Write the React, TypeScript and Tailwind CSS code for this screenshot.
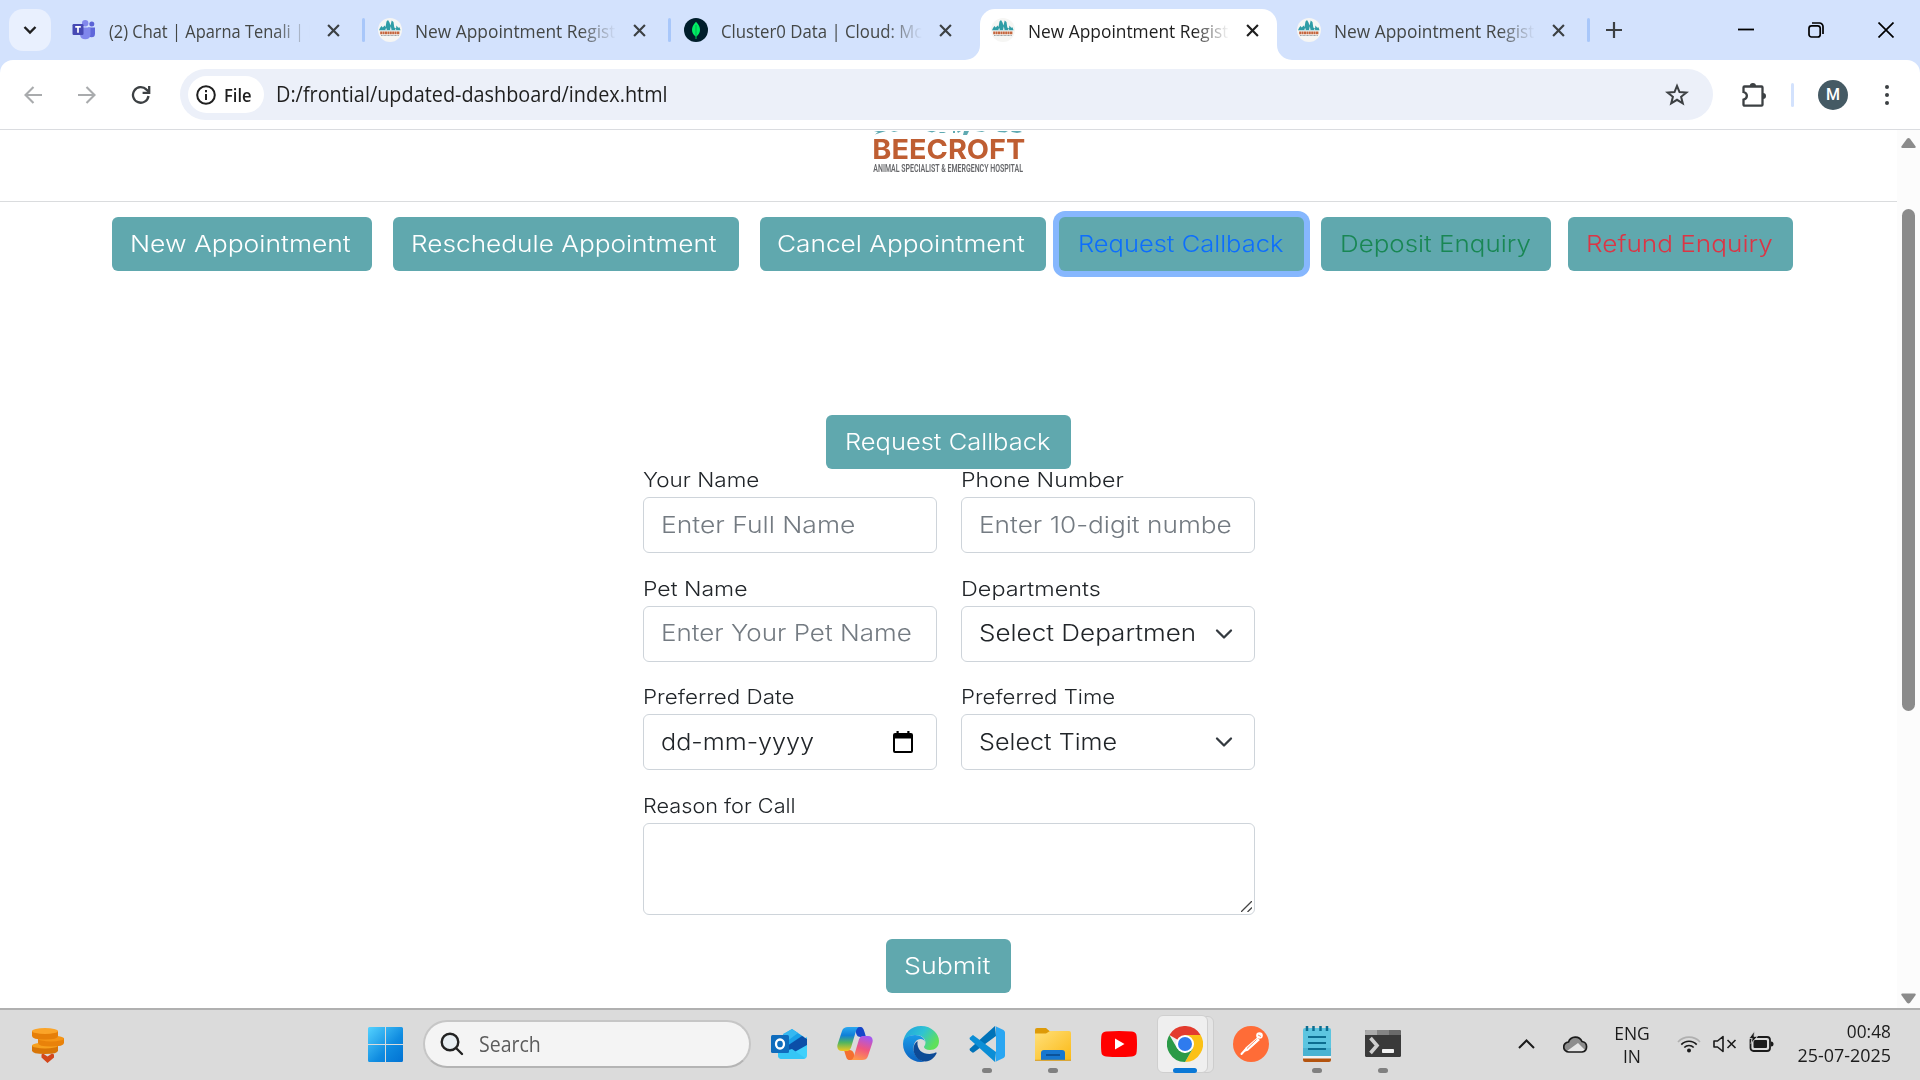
import type { ReactNode } from "react";

function HospitalMark() {
  return (
    <svg width="24" height="24" viewBox="0 0 24 24" className="shrink-0">
      <circle cx="12" cy="12" r="12" fill="#f6f6f4" />
      <path d="M1 12.200l1-2.200 1.500-2 1.300 1.500L6.500 7.500 7.500 9l1-5.500 1.500-1.500 1.500 2.500 1 3 1.200-5 1.800 1.500.8 5.500 1.700 1 .5-3 1.700 2.200 1.300-.5L22.500 12.200z" fill="#2f9da6" />
      <path d="M7.300 12.200l.8-2.400.8 2.400zM12 12.200l.8-4 .8 4zM17 12.200l.7-1.800.7 1.800z" fill="#f6f6f4" />
      <path d="M2.200 14.900h19.600" stroke="#c5663d" strokeWidth="2.600" strokeDasharray="2 .4" />
      <path d="M3 17.500h18" stroke="#9aa3a5" strokeWidth="1" strokeDasharray="1 .4" />
    </svg>
  );
}

function TeamsMark() {
  return (
    <svg width="24" height="24" viewBox="0 0 24 24" className="shrink-0">
      <circle cx="19.8" cy="6" r="2.5" fill="#5b63d6" />
      <path d="M16 9.5h7v6.2a3.5 3.5 0 01-7 0z" fill="#5f67db" />
      <circle cx="13.2" cy="5.2" r="3.2" fill="#8288ec" />
      <path d="M8 9.5h10.5v7.3a5.3 5.3 0 01-10.5 0z" fill="#8087ec" />
      <rect x=".5" y="6" width="11" height="11" rx="1.2" fill="#4649b4" />
      <path d="M3.2 8.9h5.6M6 8.9v5.8" stroke="#fff" strokeWidth="1.7" />
    </svg>
  );
}

function LeafMark() {
  return (
    <svg width="24" height="24" viewBox="0 0 24 24" className="shrink-0">
      <circle cx="12" cy="12" r="12" fill="#001e2b" />
      <path d="M12 3.800c3 3 4 5.500 4 8.200 0 3-1.600 4.800-3.600 6.400V21h-.8v-2.600C9.600 16.800 8 15 8 12c0-2.700 1-5.200 4-8.200z" fill="#00ed64" />
      <path d="M12 7v12" stroke="#00a24a" strokeWidth=".8" />
    </svg>
  );
}

function CloseX({ dark }: { dark?: boolean }) {
  return (
    <svg width="13" height="13" viewBox="0 0 12 12" className={dark ? "shrink-0 text-[#1f1f1f]" : "shrink-0 text-[#3c4043]"}>
      <path d="M1 1l10 10M11 1L1 11" stroke="currentColor" strokeWidth="2" />
    </svg>
  );
}

function Tab({ icon, scale, active, children }: { icon: ReactNode; scale: string; active?: boolean; children: string }) {
  return (
    <div className={`flex h-[42px] w-[268px] shrink-0 items-center ${active ? "text-[#1f1f1f]" : "text-[#444746]"}`}>
      {icon}
      <div className="ml-[13px] w-[201px] whitespace-nowrap pt-[2px] text-[18px] leading-6 [mask-image:linear-gradient(to_right,#000_82%,transparent)]">
        <span className={`inline-block origin-left ${scale}`}>{children}</span>
      </div>
      <div className="ml-[17px]">
        <CloseX dark={active} />
      </div>
    </div>
  );
}

function Divider({ className }: { className: string }) {
  return <div className={`h-6 w-[3px] shrink-0 rounded-full bg-[#a8c7fa] ${className}`} />;
}

function TabStrip() {
  return (
    <div className="flex h-[60px] items-start bg-[#d3e2fd] pt-[9px]">
      <div className="ml-[9px] flex h-[42px] w-[42px] items-center justify-center rounded-[14px] bg-[#e9f0fe]">
        <svg width="14" height="10" viewBox="0 0 14 10" fill="none" stroke="#1f1f1f" strokeWidth="2.4">
          <path d="M1.500 2L7 7.500 12.500 2" />
        </svg>
      </div>
      <div className="ml-[21px] flex">
        <Tab icon={<TeamsMark />} scale="scale-x-[0.912]">(2) Chat | Aparna Tenali | M</Tab>
      </div>
      <Divider className="mt-[9px] ml-[22px]" />
      <div className="ml-[13px] flex">
        <Tab icon={<HospitalMark />} scale="scale-x-[0.964]">New Appointment Regist</Tab>
      </div>
      <Divider className="mt-[9px] ml-[22px]" />
      <div className="ml-[13px] flex">
        <Tab icon={<LeafMark />} scale="scale-x-[0.932]">Cluster0 Data | Cloud: Mc</Tab>
      </div>
      <div className="relative ml-[28px] flex h-[51px] w-[297px] rounded-t-[15px] bg-white pl-[11px]">
        <svg width="15" height="15" className="absolute bottom-0 -left-[15px]" fill="#fff">
          <path d="M15 0v15H0A15 15 0 0015 0z" />
        </svg>
        <Tab icon={<HospitalMark />} scale="scale-x-[0.964]" active>New Appointment Regist</Tab>
        <svg width="15" height="15" className="absolute -right-[15px] bottom-0" fill="#fff">
          <path d="M0 0v15h15A15 15 0 010 0z" />
        </svg>
      </div>
      <div className="ml-[20px] flex">
        <Tab icon={<HospitalMark />} scale="scale-x-[0.964]">New Appointment Regist</Tab>
      </div>
      <Divider className="mt-[9px] ml-[22px]" />
      <svg width="16" height="16" className="mt-[13px] ml-[16px]" stroke="#3c4043" strokeWidth="2.2">
        <path d="M8 0v16M0 8h16" />
      </svg>
      <div className="mt-[13px] mr-[26px] ml-auto flex items-center gap-[54px]">
        <svg width="16" height="16" stroke="#000" strokeWidth="1.8">
          <path d="M0 7.500h16" />
        </svg>
        <svg width="16" height="16" fill="none" stroke="#000" strokeWidth="1.7">
          <rect x="1" y="3.800" width="11.200" height="11.200" rx="2.500" />
          <path d="M4 1h7.500A3.500 3.500 0 0115 4.500V12" />
        </svg>
        <svg width="16" height="16" stroke="#000" strokeWidth="1.700">
          <path d="M.5.500l15 15M15.500.500l-15 15" />
        </svg>
      </div>
    </div>
  );
}

function Toolbar() {
  return (
    <div className="bg-[#d3e2fd]">
      <div className="flex h-[70px] items-start rounded-t-[13px] border-b border-[#dadce0] bg-white pt-[9px]">
        <div className="flex h-[51px] w-[180px] items-center pl-[24px]">
          <svg width="18" height="18" fill="none" stroke="#a9abad" strokeWidth="2.100">
            <path d="M18 9H1.500M9.500 1L1.500 9l8 8" />
          </svg>
          <svg width="18" height="18" className="ml-[36px]" fill="none" stroke="#a9abad" strokeWidth="2.100">
            <path d="M0 9h16.500M8.500 1l8 8-8 8" />
          </svg>
          <svg width="20" height="20" viewBox="0 0 20 20" className="ml-[35px]" fill="none" stroke="#3c4043" strokeWidth="2.300">
            <path d="M17.500 11a7.800 7.800 0 11-2-6.400L18 7" />
            <path d="M18.200 1v6.800h-6.600" />
          </svg>
        </div>
        <div className="flex h-[51px] w-[1533px] items-center rounded-full bg-[#ecf0f9] pl-[8px]">
          <div className="flex h-[37px] w-[76px] items-center rounded-full bg-white pl-[8px]">
            <svg width="20" height="20" viewBox="0 0 20 20" fill="none" stroke="#1f1f1f" strokeWidth="2">
              <circle cx="10" cy="10" r="8.800" />
              <path d="M10 9v6M10 5v2.200" />
            </svg>
            <span className="ml-[8px] inline-block origin-left scale-x-[0.920] text-[18px] leading-6 font-semibold text-[#1f1f1f]">File</span>
          </div>
          <span className="ml-[12px] inline-block origin-left scale-x-[0.945] text-[21px] text-[#1f1f1f]">
            D:/frontial/updated-dashboard/index.html
          </span>
          <svg width="24" height="24" viewBox="0 0 24 24" className="mr-[24px] ml-auto" fill="none" stroke="#3c4043" strokeWidth="2">
            <path d="M12 2.800l2.500 6.200 6.900.500-5.300 4.300 1.700 6.600L12 16.800l-5.800 3.600 1.700-6.600-5.300-4.300 6.900-.500z" />
          </svg>
        </div>
        <div className="flex h-[51px] items-center">
          <svg width="27" height="27" viewBox="0 0 27 27" className="ml-[28px]" fill="none" stroke="#3c4043" strokeWidth="2.300">
            <path d="M3.500 5.500h17a1 1 0 011 1v17.200a1 1 0 01-1 1h-17a1 1 0 01-1-1v-5c4.500-1 4.500-6.700 0-7.700v-4.500a1 1 0 011-1z" />
            <path d="M8.800 5a3 3 0 016.200 0zM22 12a3 3 0 010 6z" fill="#3c4043" stroke="none" />
          </svg>
          <div className="ml-[23px] h-6 w-[3px] rounded-full bg-[#d3e2fd]" />
          <div className="ml-[24px] flex h-[30px] w-[30px] items-center justify-center rounded-full bg-[#455a64] font-['Roboto'] text-[16px] font-medium text-white">M</div>
          <div className="ml-[37px] flex flex-col gap-[4px]">
            <i className="h-[4px] w-[4px] rounded-full bg-[#3c4043]" />
            <i className="h-[4px] w-[4px] rounded-full bg-[#3c4043]" />
            <i className="h-[4px] w-[4px] rounded-full bg-[#3c4043]" />
          </div>
        </div>
      </div>
    </div>
  );
}

function ActionButton({ className, scale, children }: { className: string; scale: string; children: string }) {
  return (
    <button className={`flex h-[54px] shrink-0 items-center rounded-[6px] bg-[#60a8ae] text-[23px] whitespace-nowrap ${className}`}>
      <span className={`inline-block origin-left ${scale}`}>{children}</span>
    </button>
  );
}

function Field({ label, labelScale, first, children }: { label: string; labelScale: string; first?: boolean; children: ReactNode }) {
  return (
    <div>
      <div className={`h-[33px] text-[20px] text-[#212529] ${first ? "leading-[33px]" : "leading-[32px]"}`}>
        <span className={`inline-block origin-left ${labelScale}`}>{label}</span>
      </div>
      {children}
    </div>
  );
}

function Control({ text, scale, muted, icon }: { text: string; scale: string; muted?: boolean; icon?: ReactNode }) {
  return (
    <div className={`flex h-[56px] items-center justify-between rounded-[6px] border border-[#ced4da] bg-white pr-[21px] pl-[17.500px] text-[23px] ${muted ? "text-[#747b82]" : "text-[#212529]"}`}>
      <span className={`inline-block origin-left whitespace-nowrap ${scale}`}>{text}</span>
      {icon}
    </div>
  );
}

function Chevron() {
  return (
    <svg width="18" height="12" viewBox="0 0 18 12" className="shrink-0" fill="none" stroke="#343a40" strokeWidth="2.300" strokeLinecap="round" strokeLinejoin="round">
      <path d="M2 2.500l7 7 7-7" />
    </svg>
  );
}

function CalendarMark() {
  return (
    <svg width="20" height="22" viewBox="0 0 20 22" className="mr-[2px] shrink-0">
      <path d="M3.500 0h2.200v2h8.600V0h2.200v2H18a2 2 0 012 2v16a2 2 0 01-2 2H2a2 2 0 01-2-2V4a2 2 0 012-2h1.500zM2 7.500V20h16V7.500z" fill="#000" fillRule="evenodd" />
    </svg>
  );
}

function Page() {
  return (
    <div className="flex h-[878px] bg-white">
      <main className="w-[1897px] overflow-hidden font-['Inter'] font-[350]">
        <header className="flex h-[72px] flex-col items-center border-b border-[#dadcde]">
          <svg width="150" height="6" viewBox="0 0 150 6" fill="#5fa9b1">
            <path d="M0 1h12L7 2.500 1 4.500 4 2zM17 1h7l-4 1zM53 1h9l-4 1.500zM66 2h6l-2 1h-5zM79 1h2v2h-2zM83 1h4l-3 2zM90 1h5l-2 4h-4zM102 1h9l-3 1zM123 1h11l-3 1.500-6-.5zM137 1h9l2 1-5 1-5-1z" />
          </svg>
          <div className="h-[24px] text-[27.500px] leading-[26px] font-bold text-[#bf5e32]">
            <span className="inline-block scale-x-[1.050]">BEECROFT</span>
          </div>
          <div className="mt-[3px] flex h-[11px] w-[150px] items-center justify-center font-['Roboto'] text-[11.500px] leading-[11px] font-semibold whitespace-nowrap text-[#66676a]">
            <span className="inline-block scale-x-[0.608]">ANIMAL SPECIALIST &amp; EMERGENCY HOSPITAL</span>
          </div>
        </header>
        <nav className="flex pt-[15px] pl-[112px]">
          <ActionButton className="w-[260px] pl-[18px] text-white" scale="scale-x-[1.150]">New Appointment</ActionButton>
          <ActionButton className="ml-[21px] w-[346px] pl-[18px] text-white" scale="scale-x-[1.140]">Reschedule Appointment</ActionButton>
          <ActionButton className="ml-[21px] w-[286px] pl-[17px] text-white" scale="scale-x-[1.140]">Cancel Appointment</ActionButton>
          <ActionButton className="ml-[13px] w-[245px] pl-[18.500px] text-[#0d6efd] ring-6 ring-[#86b7fe]" scale="scale-x-[1.108]">Request Callback</ActionButton>
          <ActionButton className="ml-[17px] w-[230px] pl-[18.500px] text-[#198754]" scale="scale-x-[1.127]">Deposit Enquiry</ActionButton>
          <ActionButton className="ml-[17px] w-[225px] pl-[18px] text-[#dc3545]" scale="scale-x-[1.137]">Refund Enquiry</ActionButton>
        </nav>
        <div className="mx-auto mt-[144px] flex w-[612px] flex-col items-center">
          <ActionButton className="relative z-10 w-[245px] pl-[18.500px] text-white" scale="scale-x-[1.108]">Request Callback</ActionButton>
          <div className="-mt-[5px] grid w-full grid-cols-2 gap-x-[24px] gap-y-[19.670px]">
            <Field label="Your Name" labelScale="scale-x-[1.125]" first>
              <Control text="Enter Full Name" scale="scale-x-[1.150]" muted />
            </Field>
            <Field label="Phone Number" labelScale="scale-x-[1.160]" first>
              <Control text="Enter 10-digit numbe" scale="scale-x-[1.140]" muted />
            </Field>
            <Field label="Pet Name" labelScale="scale-x-[1.150]">
              <Control text="Enter Your Pet Name" scale="scale-x-[1.130]" muted />
            </Field>
            <Field label="Departments" labelScale="scale-x-[1.170]">
              <Control text="Select Departmen" scale="scale-x-[1.132]" icon={<Chevron />} />
            </Field>
            <Field label="Preferred Date" labelScale="scale-x-[1.120]">
              <Control text="dd-mm-yyyy" scale="scale-x-[1.095]" icon={<CalendarMark />} />
            </Field>
            <Field label="Preferred Time" labelScale="scale-x-[1.110]">
              <Control text="Select Time" scale="scale-x-[1.095]" icon={<Chevron />} />
            </Field>
            <div className="col-span-2">
              <Field label="Reason for Call" labelScale="scale-x-[1.085]">
                <div className="flex h-[92px] items-end justify-end rounded-[6px] border border-[#ced4da] p-[2px]">
                  <svg width="11" height="11" stroke="#444" strokeWidth="1.300">
                    <path d="M0 11L11 0M6.500 11L11 6.500" />
                  </svg>
                </div>
              </Field>
            </div>
          </div>
          <ActionButton className="mt-[24px] w-[125px] pl-[18px] text-white" scale="scale-x-[1.165]">Submit</ActionButton>
        </div>
      </main>
      <aside className="flex w-[23px] flex-col items-center bg-[#fcfcfc] pt-[8px] pb-[4px]">
        <svg width="15" height="10" fill="#8b8b8b">
          <path d="M6 .8q1.500-1.500 3 0l5.500 7.400q.8 1.600-1 1.800h-12q-1.800-.2-1-1.800z" />
        </svg>
        <div className="mt-[61px] h-[502px] w-[13px] rounded-full bg-[#8b8b8b]" />
        <svg width="15" height="11" className="mt-auto" fill="#8b8b8b">
          <path d="M6 9.700q1.500 1.500 3 0l5.500-7.400q.8-1.600-1-1.800h-12q-1.800.2-1 1.800z" />
        </svg>
      </aside>
    </div>
  );
}

function OutlookIcon() {
  return (
    <svg width="36" height="36" viewBox="0 0 36 36">
      <path d="M7 12L21 3l12 8v6L14 29z" fill="#1aa0e8" />
      <path d="M12 8l9-5 6 4-12 9z" fill="#35b8f1" />
      <path d="M17 21L36 11v18a4 4 0 01-4 4H11a4 4 0 01-4-4z" fill="#3fd0fb" />
      <path d="M16 20l15-10 5 3v6L20 28z" fill="#0b4fa8" />
      <path d="M7 27l14-4 13 9a4 4 0 01-2 1H11a4 4 0 01-4-4z" fill="#36c6f6" />
      <rect y="9" width="18" height="18" rx="1.500" fill="#0f6cbd" />
      <ellipse cx="9" cy="18" rx="4" ry="4.500" fill="none" stroke="#fff" strokeWidth="2.300" />
    </svg>
  );
}

function CopilotIcon() {
  return (
    <svg width="36" height="36" viewBox="0 0 36 36">
      <defs>
        <linearGradient id="cpA" x1="0" y1="0" x2="0" y2="1">
          <stop offset="0" stopColor="#2aa8f0" />
          <stop offset=".35" stopColor="#0f7fd8" />
          <stop offset=".65" stopColor="#52b55f" />
          <stop offset="1" stopColor="#f2c81f" />
        </linearGradient>
        <linearGradient id="cpB" x1="0.600" y1="0" x2="0.300" y2="1">
          <stop offset="0" stopColor="#a558f0" />
          <stop offset=".5" stopColor="#f0567f" />
          <stop offset="1" stopColor="#ff9a4a" />
        </linearGradient>
      </defs>
      <path d="M18 1h5c3 0 3.500 2 4.500 5l1.500 5h-5c-3 0-4-1-5-4z" fill="#1546c9" />
      <path d="M18 34h-5c-3 0-3.500-2-4.500-5L7 24h5c3 0 4 1 5 4z" fill="#f4702f" />
      <path d="M11 1h12c-2.500 0-3.500 2-4.300 5l-4.200 14c-1 3.500-2 5-5 5H5c-4 0-5.500-3-4.300-7L5 5c1-3 3-4 6-4z" fill="url(#cpA)" />
      <path d="M25 34H13c2.500 0 3.500-2 4.300-5l4.200-14c1-3.500 2-5 5-5H31c4 0 5.500 3 4.300 7L31 30c-1 3-3 4-6 4z" fill="url(#cpB)" />
    </svg>
  );
}

function EdgeIcon() {
  return (
    <svg width="36" height="36" viewBox="0 0 36 36">
      <defs>
        <linearGradient id="edA" x1="0" y1="0" x2="1" y2=".5">
          <stop offset="0" stopColor="#1f9de0" />
          <stop offset=".55" stopColor="#2fc3d3" />
          <stop offset="1" stopColor="#5fe05a" />
        </linearGradient>
        <linearGradient id="edB" x1="0" y1="0" x2="0" y2="1">
          <stop offset="0" stopColor="#1a9be8" />
          <stop offset="1" stopColor="#0c62c0" />
        </linearGradient>
      </defs>
      <path d="M0 17C1 7 8 0 18 0c11 0 18 8 18 15 0 6-4 9-9 9-4 0-6-1.500-6-3 0-1 1.500-1.500 1.500-4.500 0-4-4-7.500-10-7.500C6 9 2 12 0 17z" fill="url(#edA)" />
      <path d="M0 18c0-6 6-9 12-9 6 0 10 3.500 10 7.500 0-2-2-3.500-4.500-3.500-4 0-7 4-7 9.500 0 6.500 4.500 11.500 11 13-1 .3-2.300.5-3.500.5C8 36 0 28 0 18z" fill="url(#edB)" />
      <path d="M14.500 15c-2.500 1.500-4 4.500-4 8 0 7 5.500 12.500 12 12.500 5 0 9-4 11-8 .5-1-.3-1.300-1-.9-2 1-4 1.400-6 1.400-7 0-13-4-12-13z" fill="#0d4a96" />
    </svg>
  );
}

function CodeIcon() {
  return (
    <svg width="36" height="36" viewBox="0 0 36 36">
      <path d="M26 0L1 22.500a1.500 1.500 0 000 2L3 26.300c.6.500 1.300.5 2 0L27 10z" fill="#0072b8" />
      <path d="M26 36L1 13.500a1.500 1.500 0 010-2L3 9.700c.6-.5 1.300-.5 2 0L27 26z" fill="#0b8ed6" />
      <path d="M26 0l8.500 4Q36 5 36 6.500v23q0 1.500-1.500 2.500L26 36q1-.5 1-2V2q0-1.500-1-2z" fill="#2aa6f2" />
    </svg>
  );
}

function FolderIcon() {
  return (
    <svg width="36" height="36" viewBox="0 0 36 36">
      <defs>
        <linearGradient id="fdA" x1="0" y1="0" x2="1" y2="1">
          <stop offset="0" stopColor="#ffe07a" />
          <stop offset="1" stopColor="#fbb916" />
        </linearGradient>
      </defs>
      <path d="M0 4q0-2 2-2h9l4 3.500V9H0z" fill="#dd9a08" />
      <path d="M0 7.500h11L15 5h19q2 0 2 2v27H0z" fill="url(#fdA)" />
      <path d="M6 34V27q0-3 3-3h18q3 0 3 3v7z" fill="#1777cf" />
      <path d="M11 29h14" stroke="#0b4f94" strokeWidth="1.800" />
      <path d="M0 34.300h36" stroke="#d99a12" />
    </svg>
  );
}

function YoutubeIcon() {
  return (
    <svg width="36" height="36" viewBox="0 0 36 36">
      <path d="M5 5.500q13-1 26 0 4.500.3 4.700 5 .6 7.500 0 15-.2 4.700-4.700 5-13 1-26 0-4.500-.3-4.700-5-.6-7.500 0-15 .2-4.700 4.700-5z" fill="#f00" />
      <path d="M14 12.500v11l9.500-5.500z" fill="#fff" />
    </svg>
  );
}

function ChromeIcon() {
  return (
    <svg width="36" height="36" viewBox="0 0 36 36">
      <path d="M18 18L2.400 9A18 18 0 0133.600 9z" fill="#e33b2e" />
      <path d="M18 9h15.600A18 18 0 0118 36l7.800-13.500z" fill="#fbc116" />
      <path d="M25.800 22.500L18 36A18 18 0 012.400 9l7.800 13.500L18 27z" fill="#2a9a47" />
      <circle cx="18" cy="18" r="9" fill="#fff" />
      <circle cx="18" cy="18" r="7" fill="#2f7bee" />
    </svg>
  );
}

function PostmanIcon() {
  return (
    <svg width="36" height="36" viewBox="0 0 36 36">
      <circle cx="18" cy="18" r="18" fill="#ff6c37" />
      <circle cx="26.500" cy="9.500" r="3.300" fill="#fff" />
      <path d="M24 12.500L13 22l-1.500 3 3.200-.8L26 14z" fill="#fff" stroke="#fff" strokeWidth="1.200" />
      <path d="M12.500 23.500L8.500 28" stroke="#fff" strokeWidth="2" strokeLinecap="round" />
      <path d="M23.500 13.500L14 22.500M25 9l3 1.500" stroke="#ff6c37" strokeWidth=".8" />
    </svg>
  );
}

function NotepadIcon() {
  return (
    <svg width="36" height="36" viewBox="0 0 36 36">
      <path d="M4 31h28v3q0 2-2 2H6q-2 0-2-2z" fill="#b4540f" />
      <path d="M4 29h28v3.500H4z" fill="#f3f3f3" />
      <path d="M4 4q0-2 2-2h24q2 0 2 2v26H4z" fill="#5cc5e0" />
      <path d="M4 22h28v8H4z" fill="#4ab3d2" />
      <path d="M8 0v5M14.500 0v5M21.500 0v5M28 0v5" stroke="#0c6d90" strokeWidth="2.500" />
      <path d="M9 11h18M9 17h18M9 23h18" stroke="#0c6d90" strokeWidth="2" />
    </svg>
  );
}

function TerminalIcon() {
  return (
    <svg width="36" height="36" viewBox="0 0 36 36">
      <rect y="4" width="36" height="27" rx="1.500" fill="#3a3a3a" />
      <path d="M0 9V5.500Q0 4 1.500 4H12v5z" fill="#ababab" />
      <path d="M12 4h12v5H12z" fill="#858585" />
      <path d="M24 4h10.500Q36 4 36 5.500V9H24z" fill="#6a6a6a" />
      <path d="M5.500 12l6.500 7.500L5.500 27" fill="none" stroke="#cfcfcf" strokeWidth="3.600" />
      <rect x="17" y="23" width="12" height="4" rx=".8" fill="#f2f2f2" />
    </svg>
  );
}

function TaskItem({ children, running, current }: { children: ReactNode; running?: boolean; current?: boolean }) {
  return (
    <div className="relative flex h-[72px] w-[66px] justify-center pt-[18px]">
      {current && (
        <>
          <div className="absolute top-[8px] left-[10px] h-[57px] w-[52px] rounded-[6px] border border-[#cdcdcd] bg-[#e4e4e4]" />
          <div className="absolute top-[7px] left-[5px] h-[58px] w-[51px] rounded-[6px] border border-[#cfcfcf] bg-[#efefef]" />
        </>
      )}
      <div className="relative h-[36px] w-[36px]">{children}</div>
      {running && <div className="absolute top-[60px] left-[28px] h-[5px] w-[10px] rounded-full bg-[#808080]" />}
      {current && <div className="absolute top-[60px] left-[21px] h-[5px] w-[24px] rounded-full bg-[#0a78d6]" />}
    </div>
  );
}

function Taskbar() {
  return (
    <div className="flex h-[72px] bg-[#dbdbdb] text-[#1b1b1b] shadow-[inset_0_2px_0_#b0b0b0]">
      <svg width="34" height="36" viewBox="0 0 34 36" className="mt-[19px] ml-[31px]">
        <path d="M1 18.500v5q0 3.500 13 3.500t13-3.500v-5z" fill="#d87506" />
        <ellipse cx="14" cy="18.500" rx="13" ry="3" fill="#f7a01d" />
        <path d="M7 11v5q0 3.500 13 3.500T33 16v-5z" fill="#e9820a" />
        <ellipse cx="20" cy="11.500" rx="13" ry="3" fill="#f59516" />
        <path d="M1 4v5q0 3.500 13 3.500T27 9V4z" fill="#e67f08" />
        <ellipse cx="14" cy="4" rx="13" ry="3" fill="#fba428" />
        <path d="M10.500 27.500l1.500-1 4.500 3 4.500-3 2 1v3l-6.500 5.500-6-5.500z" fill="#d3471b" />
      </svg>
      <svg width="35" height="35" viewBox="0 0 35 35" className="mt-[19px] ml-[303px]">
        <defs>
          <linearGradient id="win" x1="0" y1="0" x2="35" y2="35" gradientUnits="userSpaceOnUse">
            <stop offset="0" stopColor="#54d2ff" />
            <stop offset=".6" stopColor="#0f8be0" />
            <stop offset="1" stopColor="#0272d3" />
          </linearGradient>
        </defs>
        <path d="M1.500 0H17v17H0V1.500Q0 0 1.500 0zM18 0h15.500Q35 0 35 1.500V17H18zM0 18h17v17H1.500Q0 35 0 33.500zM18 18h17v15.500q0 1.500-1.500 1.500H18z" fill="url(#win)" />
      </svg>
      <div className="mt-[12px] ml-[20px] flex h-[48px] w-[328px] items-center rounded-full border-2 border-[#c6c6c6] border-b-[#b4b4b4] bg-[#f4f4f4] pl-[15px]">
        <svg width="24" height="24" viewBox="0 0 24 24" fill="none" stroke="#222" strokeWidth="2.400" strokeLinecap="round">
          <circle cx="10" cy="10" r="8.300" fill="#e8eef2" />
          <path d="M16 16l6 6" />
        </svg>
        <span className="mt-[2px] ml-[15px] inline-block origin-left scale-x-[0.930] text-[21px] text-[#5c5c5c]">Search</span>
      </div>
      <div className="ml-[5px] flex">
        <TaskItem><OutlookIcon /></TaskItem>
        <TaskItem><CopilotIcon /></TaskItem>
        <TaskItem><EdgeIcon /></TaskItem>
        <TaskItem running><CodeIcon /></TaskItem>
        <TaskItem running><FolderIcon /></TaskItem>
        <TaskItem><YoutubeIcon /></TaskItem>
        <TaskItem current><ChromeIcon /></TaskItem>
        <TaskItem><PostmanIcon /></TaskItem>
        <TaskItem running><NotepadIcon /></TaskItem>
        <TaskItem running><TerminalIcon /></TaskItem>
      </div>
      <svg width="17" height="10" viewBox="0 0 17 10" className="mt-[31px] ml-[102px]" fill="none" stroke="#1b1b1b" strokeWidth="2">
        <path d="M1 9l7.500-7.500L16 9" />
      </svg>
      <svg width="25" height="18" viewBox="0 0 25 18" className="mt-[27px] ml-[28px]">
        <path d="M6 17a5 5 0 01-.5-10A7.300 7.300 0 0119 6.500 5.300 5.300 0 0119 17z" fill="#8d8d8d" />
        <path d="M4 16L15 8l7 7-3 2H6z" fill="#e6e6e6" />
        <path d="M6 17a5 5 0 01-.5-10A7.300 7.300 0 0119 6.500 5.300 5.300 0 0119 17z" fill="none" stroke="#1b1b1b" strokeWidth="1.700" />
      </svg>
      <div className="mt-[14px] ml-[20px] w-[48px] text-center text-[18px] leading-[23px]">
        <div className="scale-x-[0.970]">ENG</div>
        <div className="scale-x-[0.970]">IN</div>
      </div>
      <svg width="24" height="18" viewBox="0 0 24 18" className="mt-[27px] ml-[21px]" fill="none" stroke="#1b1b1b" strokeWidth="1.700">
        <path d="M1 7a15 15 0 0122 0" stroke="#b0b0b0" />
        <path d="M4.300 9.600a10.500 10.500 0 0115.400 0M7.300 12.500a6.500 6.500 0 019.400 0" />
        <circle cx="12" cy="15.500" r="2" fill="#1b1b1b" stroke="none" />
      </svg>
      <svg width="24" height="18" viewBox="0 0 24 18" className="mt-[27px] ml-[12px]" fill="none" stroke="#1b1b1b" strokeWidth="1.600" strokeLinejoin="round">
        <path d="M1 6h3.500L10 1.500v15L4.500 12H1z" />
        <path d="M14.500 5l8 8M22.500 5l-8 8" />
      </svg>
      <svg width="25" height="22" viewBox="0 0 25 22" className="mt-[23px] ml-[12px]">
        <rect x="1.500" y="6" width="19.500" height="14" rx="3" fill="none" stroke="#1b1b1b" strokeWidth="1.800" />
        <rect x="4.500" y="9" width="13.500" height="8" rx="1" fill="#1b1b1b" />
        <path d="M22 10.500q2.500 0 2.500 2.500T22 15.500z" fill="#1b1b1b" />
        <path d="M5.500 0L0 7.500h3.200L2 12.500 8.500 5.500H5z" fill="#1b1b1b" stroke="#dbdbdb" strokeWidth=".8" />
      </svg>
      <div className="mt-[11px] mr-[29px] ml-auto flex w-[100px] flex-col items-end text-[18px] leading-[24px]">
        <span className="inline-block origin-right scale-x-[0.960]">00:48</span>
        <span className="inline-block origin-right scale-x-[0.995]">25-07-2025</span>
      </div>
    </div>
  );
}

export default function App() {
  return (
    <div className="flex h-[1080px] w-[1920px] flex-col overflow-hidden font-['Open_Sans',sans-serif]">
      <TabStrip />
      <Toolbar />
      <Page />
      <Taskbar />
    </div>
  );
}
